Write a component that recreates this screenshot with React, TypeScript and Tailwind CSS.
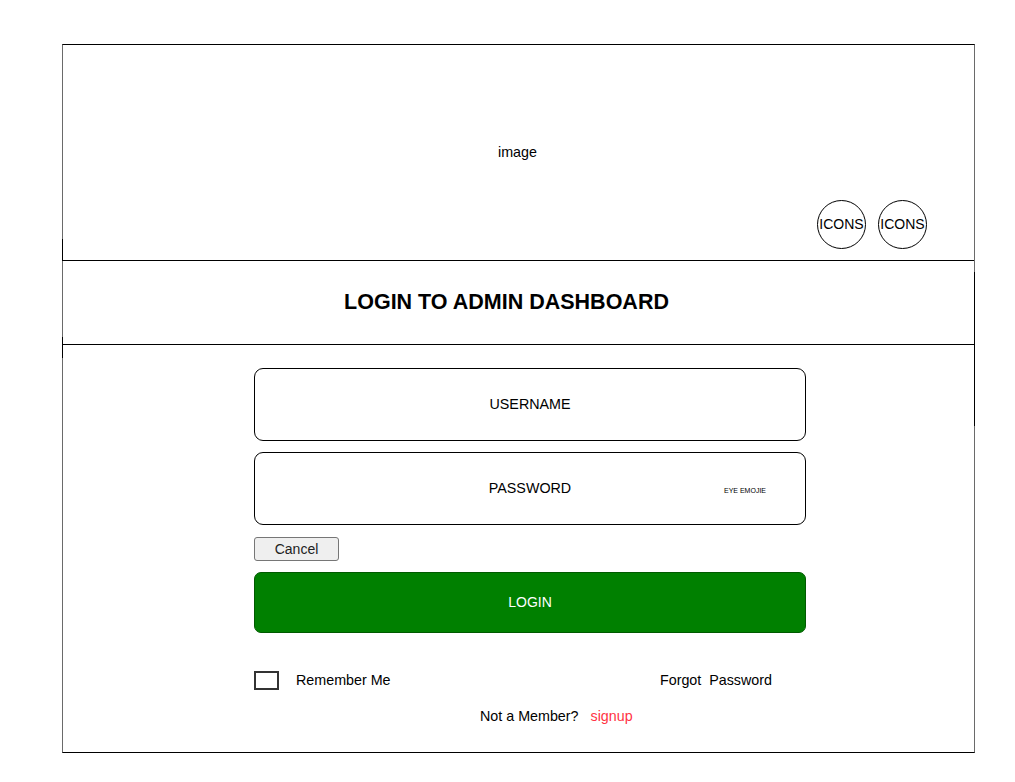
import React from "react";

export default function App() {
  return (
    <div
      className="w-[1015px] h-[782px] bg-white pt-[44px] pl-[62px]"
      style={{ fontFamily: '"Liberation Sans", Arial, sans-serif' }}
    >
      <div className="relative w-[913px] h-[709px] border-y border-y-black border-x border-x-[#6a6a6a] flex flex-col text-black">
        {/* decorative edge marks */}
        <div className="absolute left-[-1px] top-[194px] w-px h-[22px] bg-black" />
        <div className="absolute left-[-1px] top-[292px] w-px h-[21px] bg-black" />
        <div className="absolute right-[-1px] top-[227px] w-px h-[154px] bg-black" />

        {/* header */}
        <div className="h-[216px] border-b border-black grid grid-cols-1 grid-rows-1">
          <div className="col-start-1 row-start-1 flex items-center justify-center text-[14.3px] pr-[2px]">
            image
          </div>
          <div className="col-start-1 row-start-1 self-end justify-self-end mb-[11px] mr-[47px] flex gap-[12px]">
            <div className="w-[49px] h-[49px] rounded-full border border-black flex items-center justify-center text-[14px] whitespace-nowrap">
              ICONS
            </div>
            <div className="w-[49px] h-[49px] rounded-full border border-black flex items-center justify-center text-[14px] whitespace-nowrap">
              ICONS
            </div>
          </div>
        </div>

        {/* title */}
        <div className="h-[84px] border-b border-black flex items-center justify-center pr-[24px]">
          <h1 className="font-bold text-[21.5px] leading-none">LOGIN TO ADMIN DASHBOARD</h1>
        </div>

        {/* form */}
        <div className="flex-1 pl-[191px] pt-[23px]">
          <div className="w-[552px] flex flex-col">
            <div className="h-[73px] border border-black rounded-[9px] flex items-center justify-center text-[14.3px]">
              USERNAME
            </div>
            <div className="mt-[11px] h-[73px] border border-black rounded-[9px] grid grid-cols-1 grid-rows-1 text-[14.3px]">
              <div className="col-start-1 row-start-1 flex items-center justify-center">PASSWORD</div>
              <div className="col-start-1 row-start-1 self-center justify-self-start ml-[469px] text-[7px] leading-none pt-[3px]">
                EYE EMOJIE
              </div>
            </div>
            <div className="mt-[12px]">
              <button className="w-[85px] h-[24px] bg-[#efefef] border border-[#767676] rounded-[3px] text-[14px] text-[#222] leading-none">
                Cancel
              </button>
            </div>
            <div className="mt-[11px] h-[61px] bg-[#008000] border border-[#005a00] rounded-[7px] flex items-center justify-center text-white text-[14px]">
              LOGIN
            </div>
            <div className="mt-[37px] flex items-center justify-between pr-[34px] text-[14.3px]">
              <div className="flex items-center">
                <div className="w-[25px] h-[19px] border-2 border-[#333]" />
                <span className="ml-[17px]">Remember Me</span>
              </div>
              <span className="whitespace-pre">Forgot  Password</span>
            </div>
            <div className="mt-[17px] pl-[226px] text-[14.3px] leading-4 flex">
              <span>Not a Member?</span>
              <span className="ml-[12px] text-[#ff3344]">signup</span>
            </div>
          </div>
        </div>
      </div>
    </div>
  );
}
